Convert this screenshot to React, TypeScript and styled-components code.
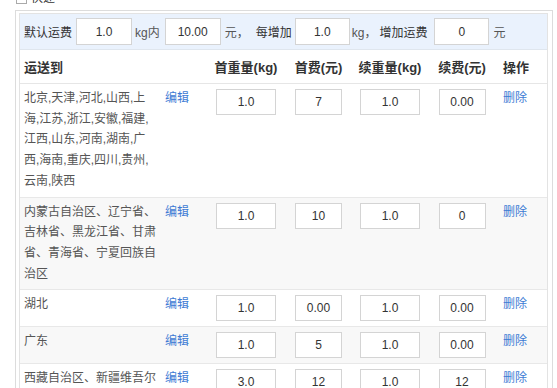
import React from "react";
import styled, { createGlobalStyle } from "styled-components";

const GlobalStyle = createGlobalStyle`
  html, body {
    margin: 0;
    padding: 0;
    background: #fff;
    overflow: hidden;
  }
  body {
    font-family: "Liberation Sans", "Noto Sans CJK SC", sans-serif;
    font-size: 12px;
    color: #333;
  }
`;

const Page = styled.div`
  padding-left: 15px;
  width: 538px;
`;

const Legend = styled.label`
  display: flex;
  align-items: center;
  height: 20px;
  margin-top: -12px;
  margin-bottom: 2px;
  padding-left: 1px;
  color: #333;
  line-height: 20px;
`;

const Check = styled.span`
  width: 9px;
  height: 9px;
  border: 1px solid #aaa;
  background: #fff;
  margin-right: 4px;
`;

const Frame = styled.div`
  border: 1px solid #dcdcdc;
  padding: 2px 4px 0 3px;
`;

const Inner = styled.div`
  border: 1px solid #e3e3e3;
  border-bottom: none;
`;

const DefaultBar = styled.div`
  display: flex;
  align-items: center;
  height: 35px;
  padding-left: 4px;
  background: #eaf2fd;
  border-bottom: 1px solid #dfe6ee;
`;

const BarText = styled.span<{ $ml?: number }>`
  margin-left: ${(p) => p.$ml ?? 0}px;
  white-space: nowrap;
  color: #333;
`;

const BarText2 = styled(BarText)`
  color: #555;
`;

const NumInput = styled.input<{ $w: number; $ml?: number; $h?: number; $mt?: number }>`
  box-sizing: border-box;
  width: ${(p) => p.$w}px;
  height: ${(p) => p.$h ?? 26}px;
  margin: ${(p) => p.$mt ?? 0}px 0 0 ${(p) => p.$ml ?? 0}px;
  padding: 0;
  border: 1px solid #d4d4d4;
  background: #fff;
  font-family: "Liberation Sans", "Noto Sans CJK SC", sans-serif;
  font-size: 12px;
  color: #333;
  text-align: center;
  outline: none;
`;

const cols = "140px 45px 82px 63px 80px 64px 1fr";

const HeadRow = styled.div`
  display: grid;
  grid-template-columns: ${cols};
  align-items: center;
  height: 33px;
  border-bottom: 1px solid #e6e6e6;
  background: #fff;
`;

const Th = styled.div<{ $align?: "left" | "center"; $pl?: number }>`
  font-size: 13px;
  font-weight: bold;
  color: #333;
  text-align: ${(p) => p.$align ?? "center"};
  padding-left: ${(p) => p.$pl ?? 0}px;
  white-space: nowrap;
`;

const Row = styled.div<{ $alt?: boolean }>`
  display: grid;
  grid-template-columns: ${cols};
  align-items: start;
  padding: 4px 0 5px;
  border-bottom: 1px solid #e8e8e8;
  background: ${(p) => (p.$alt ? "#f8f8f8" : "#fff")};
`;

const Region = styled.div`
  padding-left: 4px;
  width: 132.5px;
  line-height: 20.7px;
  color: #555;
`;

const Cell = styled.div`
  display: flex;
  justify-content: center;
`;

const Link = styled.a<{ $pl: number }>`
  display: block;
  padding-left: ${(p) => p.$pl}px;
  line-height: 20.7px;
  color: #3d7bd4;
  text-decoration: none;
  cursor: pointer;
  white-space: nowrap;
`;

type Rule = {
  region: string;
  first: string;
  fee: string;
  next: string;
  nextFee: string;
};

const rules: Rule[] = [
  {
    region: "北京,天津,河北,山西,上海,江苏,浙江,安徽,福建,江西,山东,河南,湖南,广西,海南,重庆,四川,贵州,云南,陕西",
    first: "1.0",
    fee: "7",
    next: "1.0",
    nextFee: "0.00",
  },
  {
    region: "内蒙古自治区、辽宁省、吉林省、黑龙江省、甘肃省、青海省、宁夏回族自治区",
    first: "1.0",
    fee: "10",
    next: "1.0",
    nextFee: "0",
  },
  { region: "湖北", first: "1.0", fee: "0.00", next: "1.0", nextFee: "0.00" },
  { region: "广东", first: "1.0", fee: "5", next: "1.0", nextFee: "0.00" },
  {
    region: "西藏自治区、新疆维吾尔自治区",
    first: "3.0",
    fee: "12",
    next: "1.0",
    nextFee: "12",
  },
];

export default function App() {
  return (
    <Page>
      <GlobalStyle />
      <Legend>
        <Check />
        快递
      </Legend>
      <Frame>
        <Inner>
          <DefaultBar>
            <BarText>默认运费</BarText>
            <NumInput $w={56} $h={27} $ml={4} value="1.0" readOnly />
            <BarText2 $ml={3}>kg内</BarText2>
            <NumInput $w={56} $h={27} $ml={5} value="10.00" readOnly />
            <BarText2 $ml={4}>元，</BarText2>
            <BarText $ml={7}>每增加</BarText>
            <NumInput $w={55} $h={27} $ml={3} value="1.0" readOnly />
            <BarText2 $ml={2}>kg，</BarText2>
            <BarText $ml={3}>增加运费</BarText>
            <NumInput $w={55} $h={27} $ml={7} value="0" readOnly />
            <BarText2 $ml={4}>元</BarText2>
          </DefaultBar>
          <HeadRow>
            <Th $align="left" $pl={4}>运送到</Th>
            <div />
            <Th>首重量(kg)</Th>
            <Th>首费(元)</Th>
            <Th>续重量(kg)</Th>
            <Th>续费(元)</Th>
            <Th $align="left" $pl={9}>操作</Th>
          </HeadRow>
          {rules.map((r, i) => (
            <Row key={i} $alt={i % 2 === 1}>
              <Region>{r.region}</Region>
              <Link $pl={5}>编辑</Link>
              <Cell>
                <NumInput $w={60} $mt={1} value={r.first} readOnly />
              </Cell>
              <Cell>
                <NumInput $w={47} $mt={1} value={r.fee} readOnly />
              </Cell>
              <Cell>
                <NumInput $w={60} $mt={1} value={r.next} readOnly />
              </Cell>
              <Cell>
                <NumInput $w={47} $mt={1} value={r.nextFee} readOnly />
              </Cell>
              <Link $pl={9}>删除</Link>
            </Row>
          ))}
        </Inner>
      </Frame>
    </Page>
  );
}
